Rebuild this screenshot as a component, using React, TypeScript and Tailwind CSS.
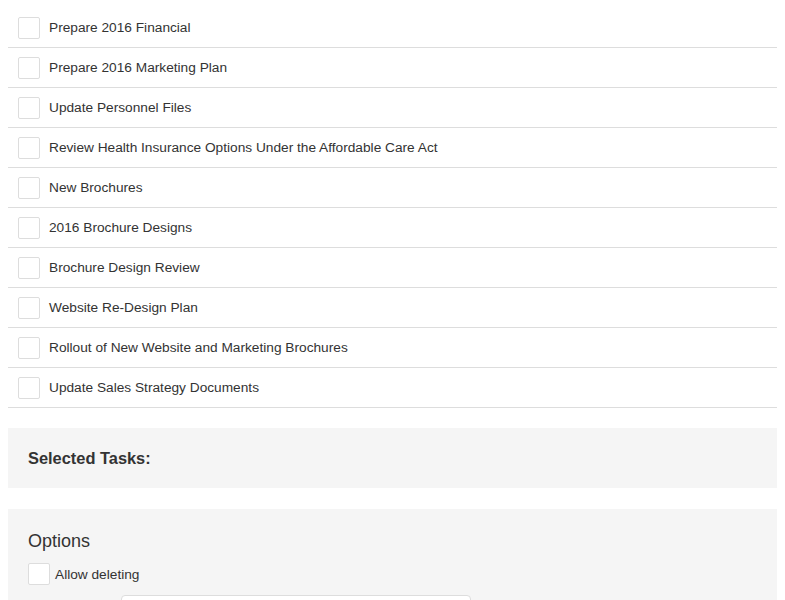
const tasks = [
  "Prepare 2016 Financial",
  "Prepare 2016 Marketing Plan",
  "Update Personnel Files",
  "Review Health Insurance Options Under the Affordable Care Act",
  "New Brochures",
  "2016 Brochure Designs",
  "Brochure Design Review",
  "Website Re-Design Plan",
  "Rollout of New Website and Marketing Brochures",
  "Update Sales Strategy Documents",
];

function Box() {
  return (
    <span className="block h-[22px] w-[22px] shrink-0 rounded-[2px] border border-[#dddddd] bg-white" />
  );
}

export default function App() {
  return (
    <div
      className="bg-white p-2 text-[13.7px] text-[#333333]"
      style={{ fontFamily: '"Liberation Sans", Arial, sans-serif' }}
    >
      <div>
        {tasks.map((t, i) => (
          <div
            key={i}
            className="flex h-10 items-center gap-[9px] border-b border-[#dddddd] pl-[10px]"
          >
            <Box />
            <span className="pt-px">{t}</span>
          </div>
        ))}
      </div>

      <div className="mt-5 bg-[#f5f5f5] p-5">
        <div className="text-[16.4px] font-bold leading-5">Selected Tasks:</div>
      </div>

      <div className="mt-[21px] bg-[#f5f5f5] p-5">
        <div className="text-[18px] leading-6">Options</div>
        <div className="mt-[9px] flex items-center gap-[5px]">
          <Box />
          <span className="pt-[3px]">Allow deleting</span>
        </div>
        <div className="mt-[9px] flex items-center">
          <div className="w-[93px] shrink-0" />
          <div className="h-9 w-[350px] rounded-[4px] border border-[#dddddd] bg-white" />
        </div>
      </div>
    </div>
  );
}
